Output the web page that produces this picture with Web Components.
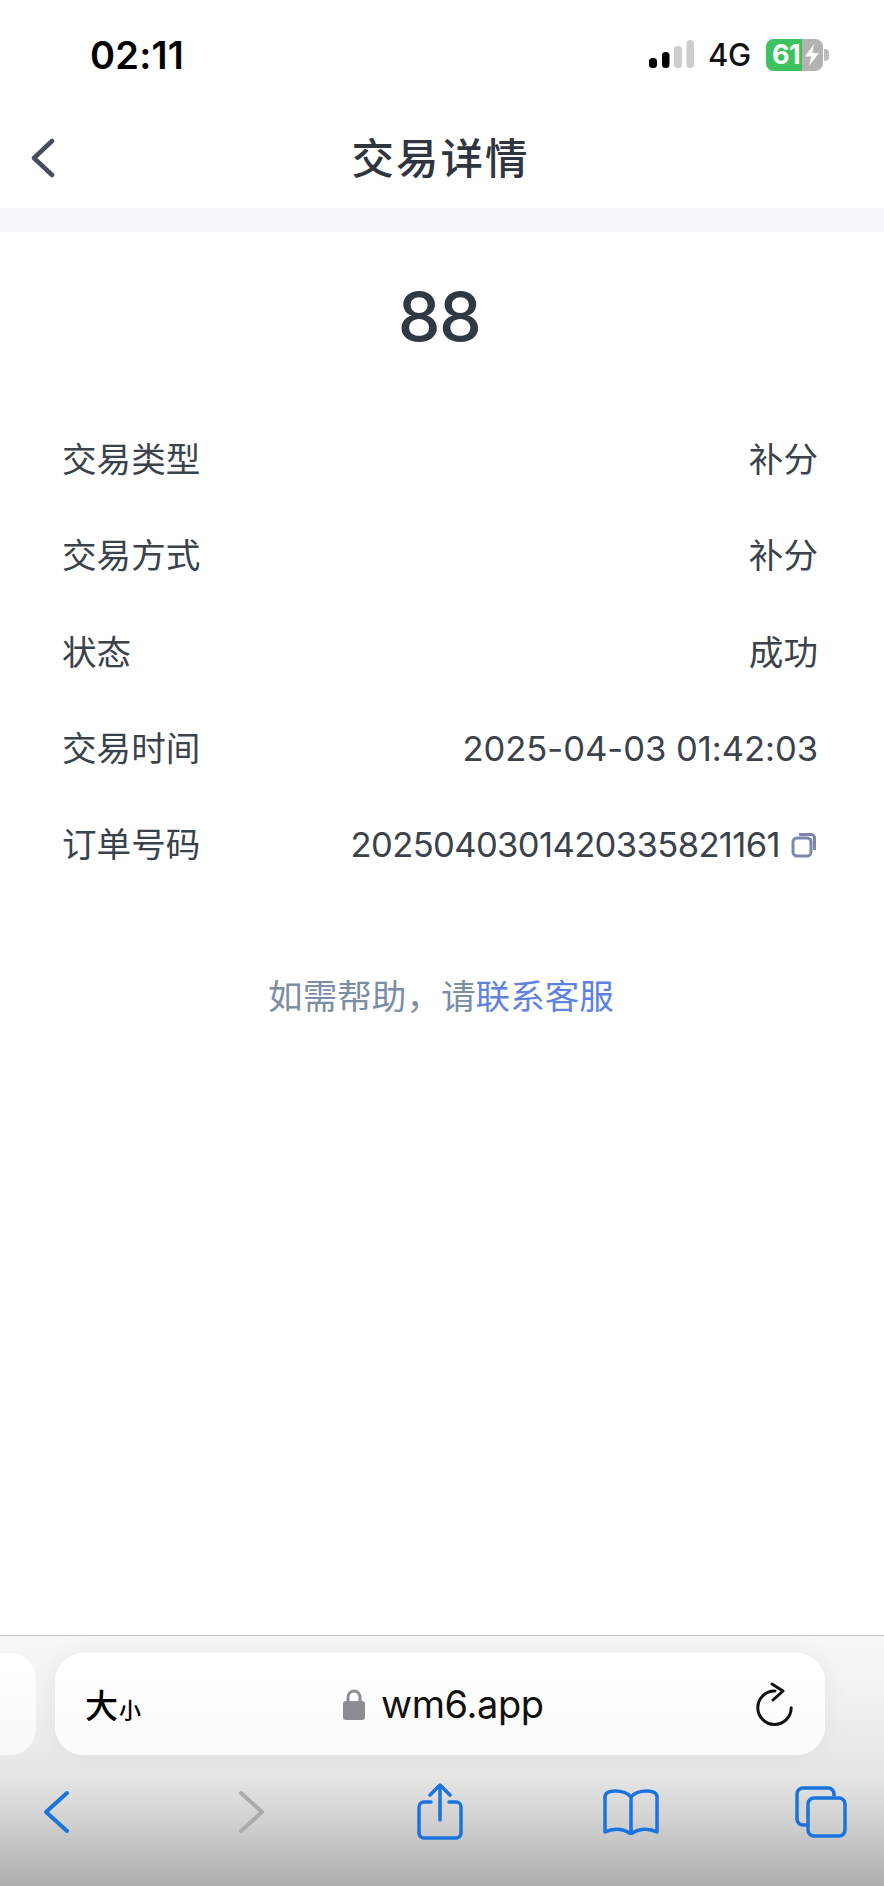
<!doctype html>
<html lang="zh"><head><meta charset="utf-8"><title>交易详情</title>
<style>
html,body{margin:0;background:#fff}
body{width:884px;height:1886px;overflow:hidden;font-family:Inter,"Noto Sans CJK SC",sans-serif}
</style></head><body>
<tx-app>
  <ios-status time="02:11" slot="top"></ios-status>
  <tx-nav title-text="交易详情" slot="top"></tx-nav>
  <tx-detail amount="88">
    <tx-row label="交易类型">补分</tx-row>
    <tx-row label="交易方式">补分</tx-row>
    <tx-row label="状态">成功</tx-row>
    <tx-row label="交易时间" style="--ls:-.04px">2025-04-03 01:42:03</tx-row>
    <tx-row label="订单号码" copy style="--ls:-.63px">2025040301420335821161</tx-row>
    <tx-help></tx-help>
  </tx-detail>
  <safari-chrome slot="bottom" host-name="wm6.app"></safari-chrome>
</tx-app>
<script>
const def=(name,html,init)=>customElements.define(name,class extends HTMLElement{
  constructor(){super();this.attachShadow({mode:'open'}).innerHTML=html;}
  connectedCallback(){init&&init(this,this.shadowRoot)}
});
def('tx-app',`<style>:host{display:flex;flex-direction:column;width:884px;height:1886px;overflow:hidden}
.mid{flex:1;min-height:0}</style>
<slot name="top"></slot><div class="mid"><slot></slot></div><slot name="bottom"></slot>`);

def('ios-status',`<style>:host{display:flex;justify-content:space-between;box-sizing:border-box;height:106px;padding:39px 55px 0 90px;background:#fff;color:#000}
.t{font:600 38px/32px Inter,sans-serif;letter-spacing:.2px;width:100px}
.r{display:flex;align-items:flex-start}
.sig{margin-top:1px;display:block}
.net{font:500 31px/32px Inter,sans-serif;margin:0 15px 0 14px;letter-spacing:-.3px;color:#111}
.bat{position:relative;display:flex;width:57px;height:32px;border-radius:8px;overflow:hidden;background:#b3b3b3}
.g{width:36px;background:#3cc35f}
.n{position:absolute;left:6px;top:0;font:700 27px/32px Inter,sans-serif;color:#fff;letter-spacing:-.5px}
.b{position:absolute;left:36px;top:5px}
.tip{width:5px;height:12px;margin:10px 0 0 1px;background:#bdbdbd;border-radius:0 4px 4px 0}
</style><div class="t"></div><div class="r">
<svg class="sig" width="45" height="29" viewBox="0 0 45 29"><rect x="0" y="18" width="8" height="10" rx="3.500" fill="#000"/><rect x="13" y="12" width="7.500" height="16" rx="3.500" fill="#000"/><rect x="25" y="6" width="8" height="22" rx="3.500" fill="#cdcdcd"/><rect x="37.500" y="0" width="7.500" height="28" rx="3.500" fill="#cdcdcd"/></svg>
<div class="net">4G</div>
<div class="bat"><div class="g"></div><div class="n">61</div>
<svg class="b" width="20" height="22" viewBox="0 0 20 22"><path d="M12 0 3 12.500h6L7 22l10-13h-6.500z" fill="#fff"/></svg></div><div class="tip"></div></div>`,
(h,s)=>{s.querySelector('.t').textContent=h.getAttribute('time')});

def('tx-nav',`<style>:host{display:flex;align-items:center;justify-content:center;position:relative;height:102px;background:#fff;border-bottom:24px solid #f6f7fc;box-sizing:content-box}
svg{position:absolute;left:29px;top:32px}
.t{font:500 42.500px/1 "Noto Sans CJK SC",sans-serif;color:#2f3640;letter-spacing:2px;margin:-2px 0 0 -3px}
</style><svg width="27" height="40" viewBox="0 0 27 40"><path d="M23 3 5 20l18 17" fill="none" stroke="#474d5c" stroke-width="4.500" stroke-linecap="round" stroke-linejoin="round"/></svg><div class="t"></div>`,
(h,s)=>{s.querySelector('.t').textContent=h.getAttribute('title-text')});

def('tx-detail',`<style>:host{display:block;background:#fff;padding:44px 66px 0 62px}
.a{font:500 68px/80px Inter,sans-serif;letter-spacing:-1.500px;color:#2f3943;text-align:center;margin:0 2px 55px 0}
</style><div class="a"></div><slot></slot>`,
(h,s)=>{s.querySelector('.a').textContent=h.getAttribute('amount')});

def('tx-row',`<style>:host{display:flex;justify-content:space-between;align-items:center;height:96.300px;font:400 34.600px/48px Inter,"Noto Sans CJK SC",sans-serif;color:#3a424c}
.v{display:flex;align-items:center;letter-spacing:var(--ls,0)}
svg{display:none;margin-left:11px}
:host([copy]) svg{display:block}
</style><span class="l"></span><span class="v"><slot></slot><svg width="27" height="27" viewBox="0 0 27 27" fill="none" stroke="#7f86ab" stroke-width="3"><path d="M8 3.500h12a3.500 3.500 0 0 1 3.500 3.500v12"/><rect x="2" y="7" width="18" height="18" rx="4"/></svg></span>`,
(h,s)=>{s.querySelector('.l').textContent=h.getAttribute('label')});

def('tx-help',`<style>:host{display:block;margin-top:78px;text-align:center;font:400 34.600px/48px "Noto Sans CJK SC",sans-serif;color:#7b8ea3;margin-right:-2px}
a{color:#5f82e2;text-decoration:none}</style>如需帮助，请<a>联系客服</a>`);

def('safari-chrome',`<style>:host{display:block;position:relative;height:250px;border-top:1px solid #c6c6c6;background:linear-gradient(#f7f7f7 0,#f1f1f1 25%,#e6e6e6 55%,#d4d4d4 72%,#adadad 100%);color:#000}
.bar{display:flex;gap:19px;margin:17px 0 0 -20px;height:102px}
.tabprev{width:56px;background:linear-gradient(#fff,#f9f9f9);border-radius:0 26px 26px 0}
.pill{box-sizing:border-box;width:770px;display:flex;align-items:center;position:relative;background:linear-gradient(#fff,#fbfbfb);border-radius:28px;box-shadow:0 0 26px rgba(0,0,0,.05);padding:0 31px 0 30px}
.aa{width:258px;font:500 33px/1 "Noto Sans CJK SC",sans-serif;display:flex;align-items:baseline}
.aa small{font-size:22px;margin-left:1px}
.host{display:flex;align-items:center;flex:1;font:400 38px/1 Inter,sans-serif;letter-spacing:-.4px;color:#111}
.host svg{margin-right:16px}
.tools{display:flex;align-items:center;padding:28px 0 0 43px}
.tools svg:nth-child(2){margin-left:168px}
.tools svg:nth-child(3){margin-left:152px}
.tools svg:nth-child(4){margin-left:140px}
.tools svg:nth-child(5){margin-left:136px}
</style>
<div class="bar"><div class="tabprev"></div><div class="pill">
<div class="aa">大<small>小</small></div>
<div class="host"><svg width="22" height="31" viewBox="0 0 22 31"><path d="M5 14V8a6 6 0 0 1 12 0v6" fill="none" stroke="#8c8c92" stroke-width="3"/><rect y="12" width="22" height="19" rx="3" fill="#8c8c92"/></svg><span id="h"></span></div>
<svg width="38" height="44" viewBox="0 0 38 44" fill="none" stroke="#111" stroke-width="3" stroke-linecap="round" stroke-linejoin="round"><path d="M19 9A16.700 16.700 0 1 0 35.200 25.700"/><path d="M16 2l11 7-10 9"/></svg>
</div></div>
<div class="tools">
<svg width="27" height="44" viewBox="0 0 27 44" fill="none" stroke="#1a73de" stroke-width="4" stroke-linecap="round" stroke-linejoin="round"><path d="M24 3 3 22l21 19"/></svg>
<svg width="27" height="44" viewBox="0 0 27 44" fill="none" stroke="#ababab" stroke-width="4" stroke-linecap="round" stroke-linejoin="round"><path d="M3 3l21 19L3 41"/></svg>
<svg width="46" height="57" viewBox="0 0 46 57" fill="none" stroke="#1a73de" stroke-width="3.500" stroke-linecap="round" stroke-linejoin="round"><path d="M14 19H7a5 5 0 0 0-5 5v26a5 5 0 0 0 5 5h32a5 5 0 0 0 5-5V24a5 5 0 0 0-5-5h-7"/><path d="M23 37V3M13 12l10-10 10 10"/></svg>
<svg width="56" height="46" viewBox="0 0 56 46" fill="none" stroke="#1a73de" stroke-width="3.500" stroke-linecap="round" stroke-linejoin="round"><path d="M28 8C24 3 18 2 12 2 7 2 3 3 2 7v36c8-4 18-4 26 2 8-6 18-6 26-2V7c-1-4-5-5-10-5-6 0-12 1-16 6zM28 8v36"/></svg>
<svg width="52" height="52" viewBox="0 0 52 52" fill="none" stroke="#1a73de" stroke-width="3.500" stroke-linejoin="round"><path d="M39 10V8a6 6 0 0 0-6-6H8a6 6 0 0 0-6 6v25a6 6 0 0 0 6 6h4"/><rect x="13" y="12" width="37" height="38" rx="6"/></svg>
</div>`,(h,s)=>{s.getElementById('h').textContent=h.getAttribute('host-name')});
</script>
</body></html>
